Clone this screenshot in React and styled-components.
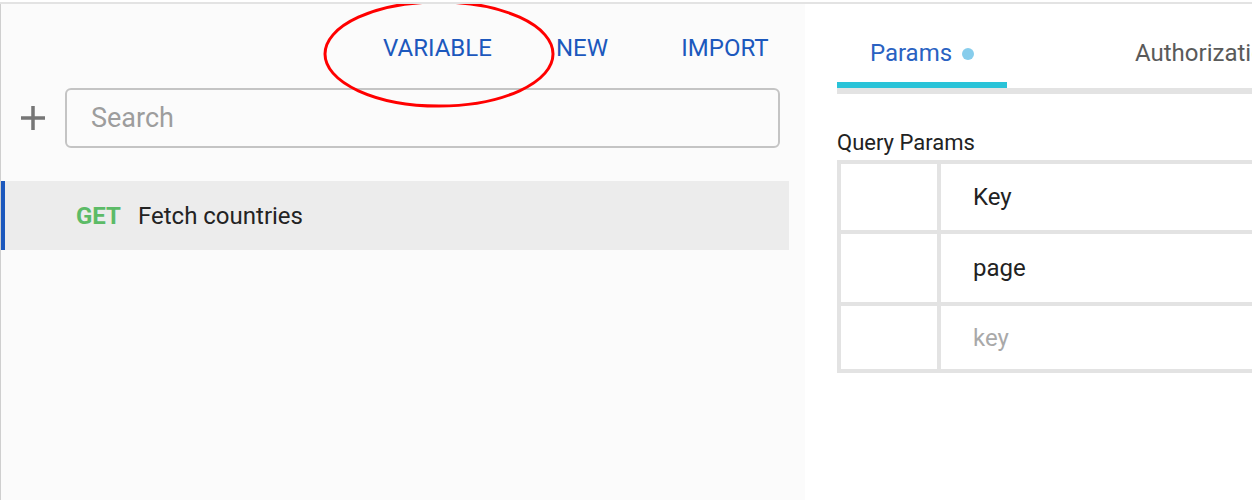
import React from "react";
import styled, { createGlobalStyle } from "styled-components";

const GlobalStyle = createGlobalStyle`
  html, body {
    margin: 0;
    padding: 0;
    background: #ffffff;
    font-family: Roboto, "Noto Sans", sans-serif;
  }
  * {
    box-sizing: border-box;
  }
`;

const Page = styled.div`
  position: relative;
  display: flex;
  height: 500px;
  margin-top: 2px;
  border-top: 2px solid #e3e3e3;
  overflow: hidden;
`;

const Sidebar = styled.div`
  width: 805px;
  flex-shrink: 0;
  background: #fbfbfb;
  border-left: 1px solid #cfcfcf;
`;

const Toolbar = styled.div`
  display: flex;
  justify-content: flex-end;
  padding: 22px 25px 0 0;
  height: 84px;
`;

const ToolButton = styled.button`
  width: ${({ width }) => width}px;
  margin-left: ${({ gap }) => gap || 0}px;
  height: 44px;
  border: 0;
  background: transparent;
  color: #1c58bd;
  font-family: inherit;
  font-size: 24px;
  text-transform: uppercase;
  cursor: pointer;
  padding: 0;
`;

const SearchRow = styled.div`
  display: flex;
  align-items: center;
  gap: 16px;
  padding: 0 25px 0 15px;
`;

const AddButton = styled.button`
  display: flex;
  align-items: center;
  justify-content: center;
  width: 33px;
  height: 33px;
  border: 0;
  padding: 0;
  background: transparent;
  cursor: pointer;
`;

const SearchInput = styled.input`
  flex: 1;
  height: 60px;
  border: 2px solid #c4c4c4;
  border-radius: 6px;
  background: #fbfbfb;
  padding: 0 24px;
  font-family: inherit;
  font-size: 27px;
  color: #333;
  outline: none;
  &::placeholder {
    color: #9d9d9d;
  }
`;

const RequestList = styled.div`
  margin-top: 33px;
  padding-right: 16px;
`;

const RequestItem = styled.div`
  display: flex;
  align-items: center;
  height: 69px;
  padding-left: 71px;
  background: ${({ active }) => (active ? "#ececec" : "transparent")};
  border-left: 4px solid ${({ active }) => (active ? "#1c58bd" : "transparent")};
  font-size: 24px;
  color: #232323;
`;

const Method = styled.span`
  font-weight: 700;
  color: #5cbb67;
  margin-right: 17px;
`;

const Main = styled.div`
  flex: 1;
  min-width: 0;
  padding-left: 32px;
  background: #ffffff;
  overflow: hidden;
`;

const TabBar = styled.div`
  display: flex;
  width: 900px;
  padding-top: 20px;
  border-bottom: 6px solid #e3e3e3;
`;

const Tab = styled.div`
  display: flex;
  align-items: center;
  justify-content: center;
  height: 64px;
  padding: 0 32px;
  min-width: 170px;
  margin-left: ${({ gap }) => gap || 0}px;
  font-size: 24px;
  color: ${({ active }) => (active ? "#2a62c2" : "#5a5a5a")};
  border-bottom: 6px solid ${({ active }) => (active ? "#29c3d8" : "transparent")};
  white-space: nowrap;
`;

const Dot = styled.span`
  width: 12px;
  height: 12px;
  border-radius: 50%;
  background: #87cdec;
  margin-left: 10px;
  margin-top: 2px;
`;

const SectionTitle = styled.div`
  margin-top: 36px;
  font-size: 22px;
  line-height: 26px;
  color: #222;
`;

const Table = styled.div`
  margin-top: 4px;
  width: 800px;
  display: grid;
  grid-template-columns: 96px 1fr;
  gap: 4px;
  padding: 4px;
  background: #e3e3e3;
`;

const Cell = styled.div`
  display: flex;
  align-items: center;
  height: ${({ h }) => h}px;
  padding-left: 32px;
  background: #ffffff;
  font-size: 24px;
  color: ${({ muted }) => (muted ? "#a9a9a9" : "#222")};
`;

const Annotation = styled.svg`
  position: absolute;
  left: 320px;
  top: -4px;
  pointer-events: none;
`;

const rows = [
  { key: "Key", h: 66 },
  { key: "page", h: 68 },
  { key: "key", h: 63, muted: true },
];

export default function App() {
  return (
    <>
      <GlobalStyle />
      <Page>
        <Sidebar>
          <Toolbar>
            <ToolButton width={131}>Variable</ToolButton>
            <ToolButton width={110} gap={24}>New</ToolButton>
            <ToolButton width={110} gap={33}>Import</ToolButton>
          </Toolbar>
          <SearchRow>
            <AddButton>
              <svg width="26" height="26" viewBox="0 0 26 26">
                <path d="M13 1v24M1 13h24" stroke="#767676" strokeWidth="3.5" />
              </svg>
            </AddButton>
            <SearchInput placeholder="Search" />
          </SearchRow>
          <RequestList>
            <RequestItem active>
              <Method>GET</Method>
              Fetch countries
            </RequestItem>
          </RequestList>
        </Sidebar>
        <Main>
          <TabBar>
            <Tab active>
              Params
              <Dot />
            </Tab>
            <Tab gap={96}>Authorization</Tab>
          </TabBar>
          <SectionTitle>Query Params</SectionTitle>
          <Table>
            {rows.map((row) => (
              <React.Fragment key={row.key}>
                <Cell h={row.h} />
                <Cell h={row.h} muted={row.muted}>
                  {row.key}
                </Cell>
              </React.Fragment>
            ))}
          </Table>
        </Main>
        <Annotation width="240" height="120" viewBox="0 0 240 120">
          <ellipse cx="119" cy="54" rx="114" ry="52" fill="none" stroke="#f00" strokeWidth="3" />
        </Annotation>
      </Page>
    </>
  );
}
